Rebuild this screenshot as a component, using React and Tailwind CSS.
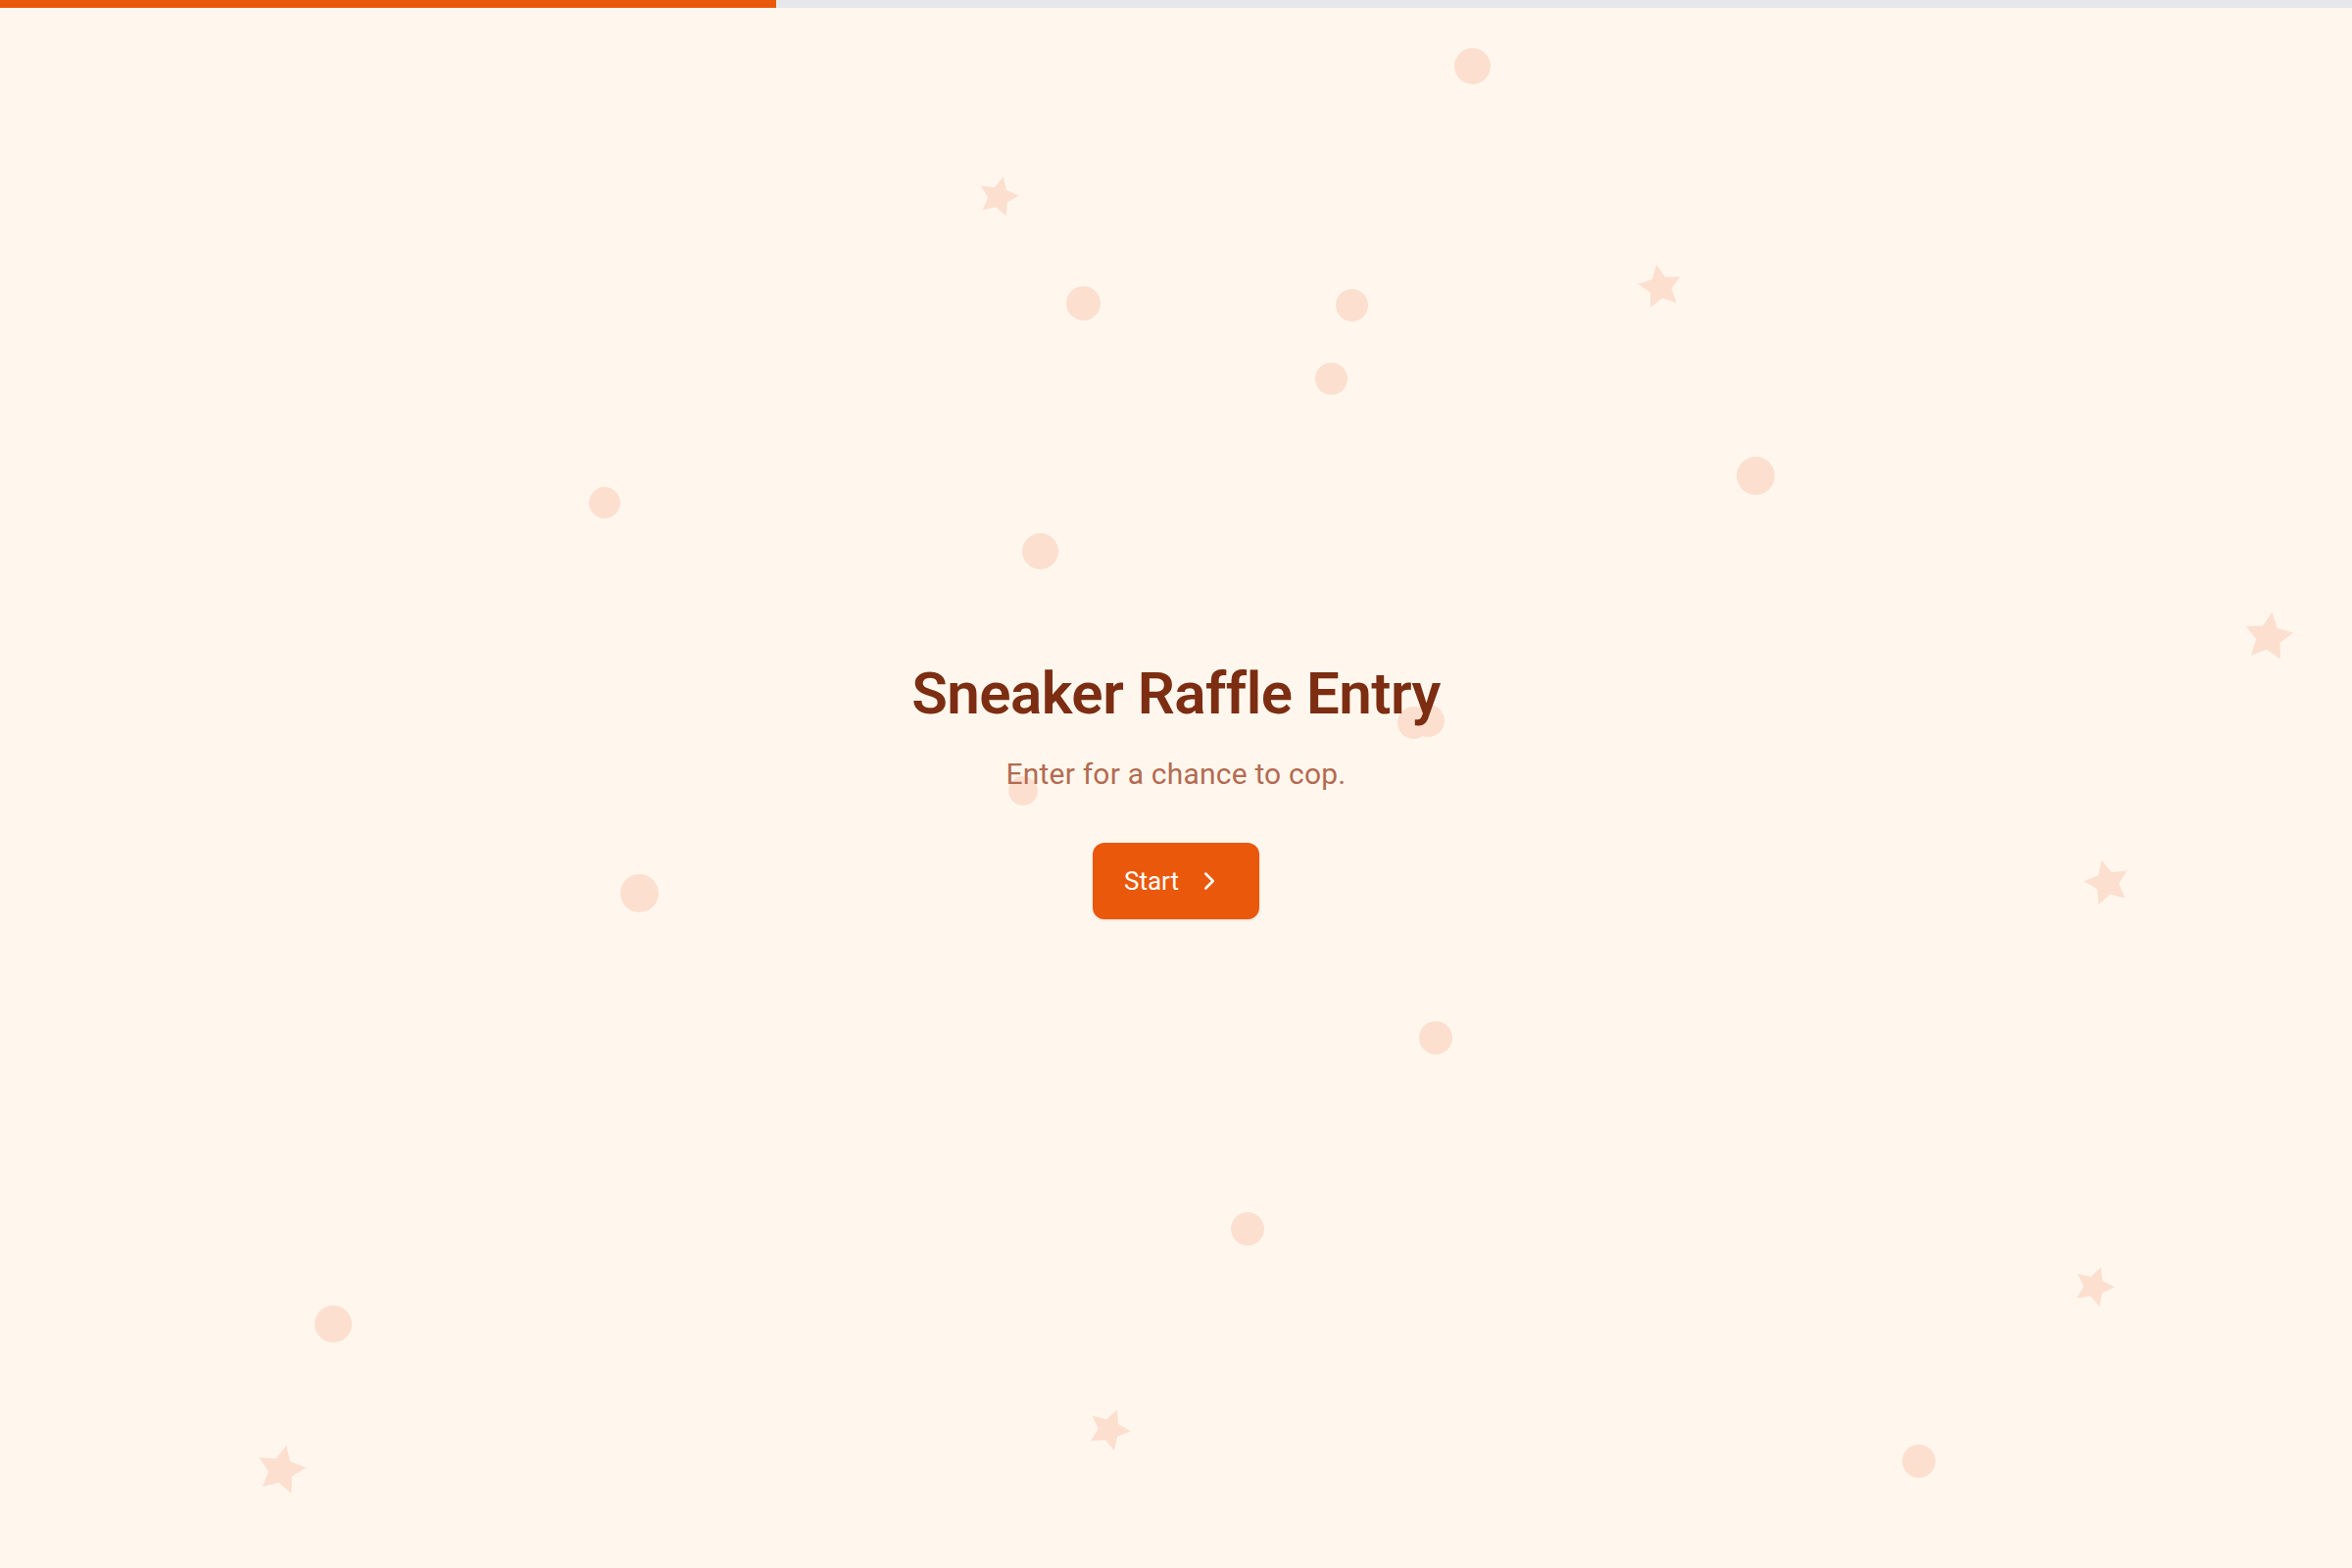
import React from 'react';
import { ChevronRight } from 'lucide-react';

// background confetti: [centerX, centerY, size]
const DOTS = [
  [1502, 67, 37],
  [1105, 309, 35],
  [1379, 311, 33],
  [1358, 386, 33],
  [1791, 485, 39],
  [617, 513, 32],
  [1061, 562, 37],
  [1442, 737, 33],
  [1457, 735, 33],
  [1044, 807, 30],
  [652, 911, 39],
  [1465, 1059, 34],
  [1273, 1254, 34],
  [340, 1351, 38],
  [1958, 1491, 34],
];

// [centerX, centerY, size, rotation]
const STARS = [
  [1019, 200, 46, 14],
  [1694, 292, 50, -10],
  [2315, 649, 56, 8],
  [2150, 900, 52, -14],
  [2137, 1312, 46, 20],
  [1132, 1458, 48, 22],
  [287, 1499, 56, 12],
];

function Star({ size, rotate, style }) {
  return (
    <svg
      viewBox="0 0 100 100"
      width={size}
      height={size}
      className="absolute"
      style={{ ...style, transform: `rotate(${rotate}deg)` }}
    >
      <polygon
        fill="#fddfcf"
        points="50,6 63.5,33.4 93.8,37.8 71.9,59.1 77,89.2 50,75 23,89.2 28.1,59.1 6.2,37.8 36.5,33.4"
      />
    </svg>
  );
}

export default function App() {
  const progress = 33;

  return (
    <div className="relative h-screen w-full overflow-hidden bg-[#fff7ed] font-['Roboto',sans-serif] flex flex-col">
      {/* Progress */}
      <div className="h-2 w-full bg-[#e5e7eb] shrink-0 relative z-10">
        <div className="h-full bg-[#ea580c]" style={{ width: `${progress}%` }} />
      </div>

      {/* Confetti */}
      <div className="absolute inset-0 pointer-events-none">
        {DOTS.map(([x, y, d], i) => (
          <div
            key={i}
            className="absolute rounded-full bg-[#fddfcf]"
            style={{ left: x - d / 2, top: y - d / 2, width: d, height: d }}
          />
        ))}
        {STARS.map(([x, y, s, r], i) => (
          <Star key={i} size={s} rotate={r} style={{ left: x - s / 2, top: y - s / 2 }} />
        ))}
      </div>

      {/* Intro */}
      <main className="relative flex-1 flex flex-col items-center justify-center pt-2 text-center">
        <h1 className="text-[60px] leading-none font-semibold tracking-[-0.5px] text-[#7c2d12]">
          Sneaker Raffle Entry
        </h1>
        <p className="mt-[34px] text-[30px] leading-9 tracking-[0.2px] text-[#b36b52]">
          Enter for a chance to cop.
        </p>
        <button className="mt-[52px] h-[78px] flex items-center gap-4 pl-8 pr-9 rounded-xl bg-[#ea580c] text-white text-[26px] shadow-sm">
          Start
          <ChevronRight size={30} strokeWidth={2} />
        </button>
      </main>
    </div>
  );
}
